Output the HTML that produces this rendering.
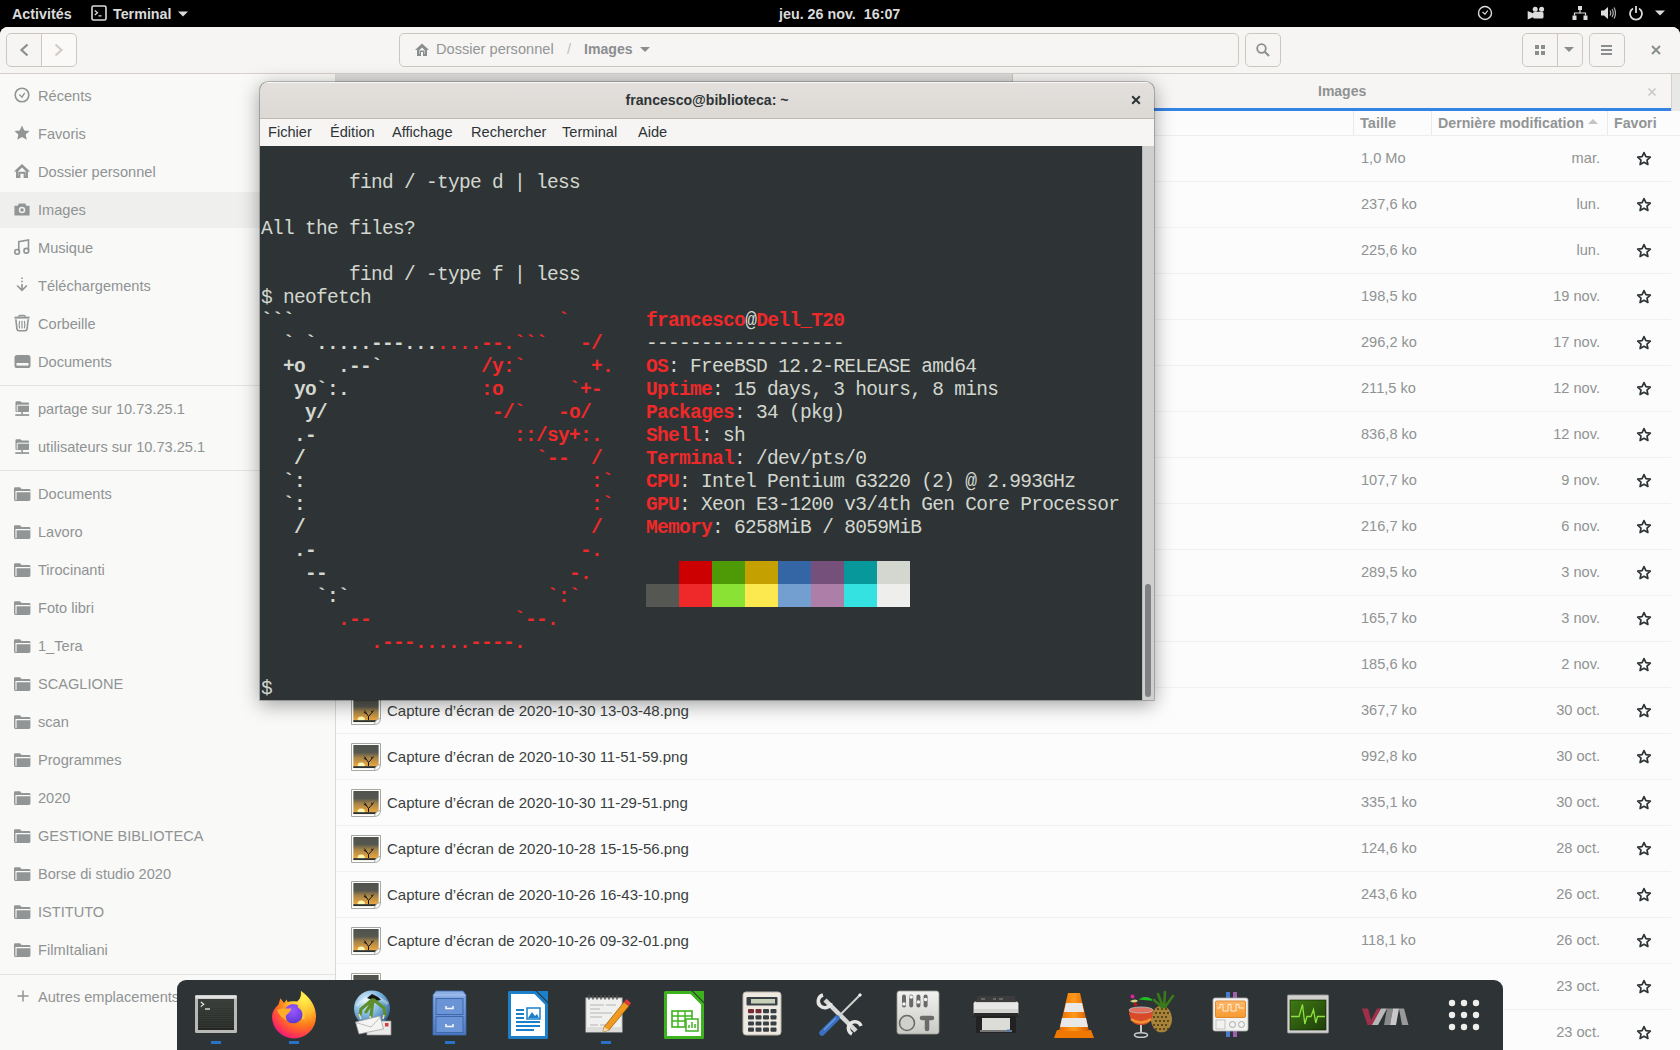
<!DOCTYPE html>
<html><head><meta charset="utf-8">
<style>
*{margin:0;padding:0;box-sizing:border-box}
html,body{width:1680px;height:1050px;overflow:hidden;background:#000;font-family:"Liberation Sans",sans-serif}
.a{position:absolute}
#top{left:0;top:0;width:1680px;height:27px;background:#000;color:#dadada;font-weight:bold;font-size:14.3px}
#naut{left:0;top:27px;width:1680px;height:1023px;background:#fcfcfc;border-radius:8px 8px 0 0;overflow:hidden}
#hdr{left:0;top:0;width:1680px;height:47px;background:#f6f5f4;border-bottom:1px solid #d5d0cc}
.btn{border:1px solid #cdc7c2;border-radius:5px;background:#f6f5f4}
#side{left:0;top:47px;width:336px;height:976px;background:#f9f9f8;border-right:1px solid #dcd8d4}
.si{position:absolute;left:38px;font-size:14.6px;color:#8f9393;white-space:nowrap}
.sic{position:absolute;left:15px;width:16px;height:16px;overflow:visible}
.sep{position:absolute;left:0;width:335px;height:1px;background:#e6e4e2}
#tabs{left:336px;top:47px;width:1344px;height:37px;background:#e9e8e6}
#list{left:336px;top:84px;width:1344px;height:939px;background:#fcfcfc}
.row{position:absolute;left:0;width:1335px;height:46px;border-bottom:1px solid #f1f1f0}
.fn{position:absolute;left:51px;top:14px;font-size:15px;color:#3a3f40;white-space:nowrap}
.sz{position:absolute;left:1025px;top:14px;font-size:14.6px;color:#8f9393;white-space:nowrap}
.dt{position:absolute;right:71px;top:14px;font-size:14.6px;color:#8f9393;white-space:nowrap;text-align:right}
.star{position:absolute;left:1300px;top:15px;width:16px;height:16px}
.fic{position:absolute;left:15px;top:9px;width:30px;height:28px}
#term{left:260px;top:82px;width:894px;height:618px;border-radius:8px 8px 0 0;box-shadow:0 4px 20px rgba(0,0,0,0.38),0 0 0 1px rgba(0,0,0,0.22);overflow:hidden;background:#2e3436}
#ttl{left:0;top:0;width:894px;height:37px;background:linear-gradient(#e3e0dd,#dcd8d4);box-shadow:inset 0 1px rgba(255,255,255,0.75);border-bottom:1px solid #bfb8b1;color:#2e3436;font-weight:bold;font-size:14.1px;text-align:center;line-height:36px}
#menu{left:0;top:37px;width:894px;height:27px;background:#f6f5f4;color:#2e3436;font-size:14.6px}
#menu span{position:absolute;top:5px}
#scr{left:0;top:64px;width:882px;height:554px;background:#2e3436;font-family:"Liberation Mono",monospace;font-size:19.5px;letter-spacing:-0.7px;color:#d3d7cf}
.tl{position:absolute;left:1px;margin-top:2px;height:23px;line-height:23px;white-space:pre}
.b{font-weight:bold}
.r{color:#ef2929;font-weight:bold}
#scr b{font-weight:bold}
#scr i{font-style:normal;font-weight:bold;color:#ef2929}
#sb{left:882px;top:64px;width:12px;height:554px;background:#cfcfcf;border-left:1px solid #b9b9b9}
#dock{left:177px;top:980px;width:1326px;height:70px;background:#2e3436;border-radius:9px 9px 0 0}
</style></head><body>
<div id="top" class="a">
  <div class="a" style="left:12px;top:6px">Activités</div>
  <svg class="a" style="left:91px;top:5px" width="16" height="16" viewBox="0 0 16 16"><rect x="1" y="1" width="14" height="14" rx="1.5" fill="none" stroke="#dadada" stroke-width="1.6"/><path d="M3.8 5.5 L6.5 7.8 L3.8 10.1 M7.5 10.8 L10.5 10.8" fill="none" stroke="#dadada" stroke-width="1.3"/></svg>
  <div class="a" style="left:113px;top:6px">Terminal</div>
  <svg class="a" style="left:177px;top:10px" width="12" height="8" viewBox="0 0 12 8"><path d="M1 1.5 L11 1.5 L6 6.5 Z" fill="#dadada"/></svg>
  <div class="a" style="left:779px;top:6px">jeu. 26 nov.&nbsp; 16:07</div>
  <svg class="a" style="left:1477px;top:5px" width="16" height="16" viewBox="0 0 16 16"><circle cx="8" cy="8" r="6.5" fill="none" stroke="#dcdcdc" stroke-width="1.4"/><path d="M5.5 7 L8 9.2 L10.8 5.5" fill="none" stroke="#dcdcdc" stroke-width="1.2"/></svg>
  <svg class="a" style="left:1526px;top:0" width="20" height="27" viewBox="1526 0 20 27"><path d="M1527.7 11 L1533.5 13.5 L1533.5 17 L1527.7 19.4 Z" fill="#dcdcdc"/><rect x="1533" y="11.8" width="10.5" height="6.8" rx="1.6" fill="#dcdcdc"/><circle cx="1535.2" cy="9.3" r="2.5" fill="#dcdcdc"/><circle cx="1541.6" cy="9.3" r="2.5" fill="#dcdcdc"/></svg>
  <svg class="a" style="left:1572px;top:5px" width="16" height="16" viewBox="0 0 16 16"><rect x="6" y="1" width="4" height="4" fill="#dcdcdc"/><rect x="0.5" y="10.5" width="4" height="4.5" fill="#dcdcdc"/><rect x="11.5" y="10.5" width="4" height="4.5" fill="#dcdcdc"/><path d="M8 5 L8 8 M2.5 10.5 L2.5 8 L13.5 8 L13.5 10.5" fill="none" stroke="#dcdcdc" stroke-width="1.2"/></svg>
  <svg class="a" style="left:1600px;top:5px" width="16" height="16" viewBox="0 0 16 16"><path d="M1 5.5 L4 5.5 L8 2 L8 14 L4 10.5 L1 10.5 Z" fill="#dcdcdc"/><path d="M10 5.5 Q11.5 8 10 10.5 M12 4 Q14.5 8 12 12 M14 2.5 Q17 8 14 13.5" fill="none" stroke="#b0b0ae" stroke-width="1.2"/></svg>
  <svg class="a" style="left:1628px;top:5px" width="16" height="16" viewBox="0 0 16 16"><path d="M5 3.5 A6 6 0 1 0 11 3.5" fill="none" stroke="#dcdcdc" stroke-width="1.8"/><path d="M8 1 L8 8" stroke="#dcdcdc" stroke-width="1.8"/></svg>
  <svg class="a" style="left:1654px;top:9px" width="12" height="8" viewBox="0 0 12 8"><path d="M1 1.5 L11 1.5 L6 6.5 Z" fill="#dcdcdc"/></svg>
</div>
<div id="naut" class="a">
  <div id="hdr" class="a">
  <div class="a btn" style="left:6px;top:6px;width:71px;height:34px;background:linear-gradient(90deg,#f6f5f4 50%,#faf9f8 50%)"></div>
  <div class="a" style="left:41px;top:7px;width:1px;height:32px;background:#cdc7c2"></div>
  <svg class="a" style="left:0;top:0" width="80" height="47"><path d="M27.5 17.5 L21.5 23 L27.5 28.5" fill="none" stroke="#8b8e8f" stroke-width="2.2"/><path d="M55.5 17.5 L61.5 23 L55.5 28.5" fill="none" stroke="#d2ccc7" stroke-width="2.2"/></svg>
  
  <div class="a btn" style="left:399px;top:6px;width:840px;height:34px"></div>
  <svg class="a" style="left:414px;top:15px" width="16" height="16" viewBox="0 0 16 16"><path d="M8 1.5 L1 8 L3 8 L3 14 L7 14 L7 10 L9 10 L9 14 L13 14 L13 8 L15 8 Z M5 8.5 L8 5.5 L11 8.5 L11 12 L10.5 12 L10.5 8.5 L5.5 8.5 L5.5 12 L5 12 Z" fill="#8b8e8f" fill-rule="evenodd"/></svg>
  <div class="a" style="left:436px;top:14px;font-size:14.6px;color:#929595;white-space:nowrap">Dossier personnel</div>
  <div class="a" style="left:567px;top:14px;font-size:14.6px;color:#c0bfbd">/</div>
  <div class="a" style="left:584px;top:14px;font-size:14.1px;color:#8b8e8f;font-weight:bold">Images</div>
  <svg class="a" style="left:638px;top:17px" width="14" height="12" viewBox="0 0 14 12"><path d="M2 3 L12 3 L7 8 Z" fill="#8b8e8f"/></svg>
  <div class="a btn" style="left:1245px;top:6px;width:36px;height:34px"></div>
  <svg class="a" style="left:1255px;top:15px" width="16" height="16" viewBox="0 0 16 16"><circle cx="6.5" cy="6.5" r="4.3" fill="none" stroke="#8b8e8f" stroke-width="1.8"/><path d="M9.5 9.5 L14 14" stroke="#8b8e8f" stroke-width="2"/></svg>
  <div class="a btn" style="left:1522px;top:6px;width:61px;height:34px"></div>
  <div class="a" style="left:1557px;top:7px;width:1px;height:32px;background:#cdc7c2"></div>
  <svg class="a" style="left:1532px;top:15px" width="16" height="16" viewBox="0 0 16 16"><rect x="3" y="3" width="4" height="4" fill="#8b8e8f"/><rect x="9" y="3" width="4" height="4" fill="#8b8e8f"/><rect x="3" y="9" width="4" height="4" fill="#8b8e8f"/><rect x="9" y="9" width="4" height="4" fill="#8b8e8f"/></svg>
  <svg class="a" style="left:1562px;top:16px" width="14" height="14" viewBox="0 0 14 14"><path d="M2 4 L12 4 L7 9 Z" fill="#8b8e8f"/></svg>
  <div class="a btn" style="left:1589px;top:6px;width:36px;height:34px"></div>
  <svg class="a" style="left:1599px;top:15px" width="16" height="16" viewBox="0 0 16 16"><rect x="2" y="3" width="11" height="2" fill="#8b8e8f"/><rect x="2" y="7" width="11" height="2" fill="#8b8e8f"/><rect x="2" y="11" width="11" height="2" fill="#8b8e8f"/></svg>
  <svg class="a" style="left:1648px;top:15px" width="16" height="16" viewBox="0 0 16 16"><path d="M4 4 L12 12 M12 4 L4 12" stroke="#8b8e8f" stroke-width="2"/></svg>
</div>
  <div id="side" class="a">
<div class="a" style="left:0;top:118px;width:335px;height:36px;background:#efefee"></div>
<svg class="sic" style="top:13px" width="16" height="16" viewBox="0 0 16 16"><g transform="translate(7,8) scale(1.08) translate(-8,-8)"><circle cx="8" cy="8" r="6.3" fill="none" stroke="#929595" stroke-width="1.5"/><path d="M5.5 7.5 L8 10 L10.5 6" fill="none" stroke="#929595" stroke-width="1.2"/></g></svg><div class="si" style="top:14px">Récents</div>
<svg class="sic" style="top:51px" width="16" height="16" viewBox="0 0 16 16"><g transform="translate(7,8) scale(1.08) translate(-8,-8)"><path d="M8 1 L10.1 5.6 L15 6.1 L11.4 9.4 L12.4 14.3 L8 11.8 L3.6 14.3 L4.6 9.4 L1 6.1 L5.9 5.6 Z" fill="#929595"/></g></svg><div class="si" style="top:52px">Favoris</div>
<svg class="sic" style="top:89px" width="16" height="16" viewBox="0 0 16 16"><g transform="translate(7,8) scale(1.08) translate(-8,-8)"><path d="M8 1.5 L0.5 8.5 L2.5 8.5 L2.5 14.5 L6.5 14.5 L6.5 10.5 L9.5 10.5 L9.5 14.5 L13.5 14.5 L13.5 8.5 L15.5 8.5 Z M4.5 8.2 L8 4.8 L11.5 8.2 L11.5 12.5 L11.2 12.5 L11.2 8.7 L4.8 8.7 L4.8 12.5 L4.5 12.5 Z" fill="#929595" fill-rule="evenodd"/></g></svg><div class="si" style="top:90px">Dossier personnel</div>
<svg class="sic" style="top:127px" width="16" height="16" viewBox="0 0 16 16"><g transform="translate(7,8) scale(1.08) translate(-8,-8)"><path d="M1 5 L4 5 L5 3 L11 3 L12 5 L15 5 L15 14 L1 14 Z" fill="#929595"/><circle cx="8" cy="9" r="3" fill="#efefee"/><circle cx="8" cy="9" r="1.6" fill="#929595"/></g></svg><div class="si" style="top:128px">Images</div>
<svg class="sic" style="top:165px" width="16" height="16" viewBox="0 0 16 16"><g transform="translate(7,8) scale(1.08) translate(-8,-8)"><path d="M5 12 L5 3 L14 1.5 L14 11" fill="none" stroke="#929595" stroke-width="1.5"/><circle cx="3.5" cy="12.5" r="2.2" fill="none" stroke="#929595" stroke-width="1.5"/><circle cx="12" cy="11.5" r="2.2" fill="none" stroke="#929595" stroke-width="1.5"/></g></svg><div class="si" style="top:166px">Musique</div>
<svg class="sic" style="top:203px" width="16" height="16" viewBox="0 0 16 16"><g transform="translate(7,8) scale(1.08) translate(-8,-8)"><path d="M8 1 L8 2.5 M8 4 L8 5.5 M8 7 L8 12 M3.5 8.5 L8 13 L12.5 8.5" fill="none" stroke="#929595" stroke-width="1.5"/></g></svg><div class="si" style="top:204px">Téléchargements</div>
<svg class="sic" style="top:241px" width="16" height="16" viewBox="0 0 16 16"><g transform="translate(7,8) scale(1.08) translate(-8,-8)"><path d="M1 3 H15" stroke="#929595" stroke-width="1.8"/><path d="M5 2.2 Q5 1 6.2 1 H9.8 Q11 1 11 2.2" fill="none" stroke="#929595" stroke-width="1.4"/><path d="M2.3 4.5 L3.3 13.5 Q3.5 15.2 5.2 15.2 L10.8 15.2 Q12.5 15.2 12.7 13.5 L13.7 4.5" fill="none" stroke="#929595" stroke-width="1.5"/><path d="M5.8 6 Q5 9.5 5.8 13 M8 6 V13 M10.2 6 Q11 9.5 10.2 13" fill="none" stroke="#929595" stroke-width="1.1"/></g></svg><div class="si" style="top:242px">Corbeille</div>
<svg class="sic" style="top:279px" width="16" height="16" viewBox="0 0 16 16"><rect x="-0.5" y="2" width="16" height="13" rx="2.6" fill="#929595"/><rect x="1.5" y="10" width="12" height="2.6" fill="#f9f9f8"/></svg><div class="si" style="top:280px">Documents</div>
<svg class="sic" style="top:326px" width="16" height="16" viewBox="0 0 16 16"><path d="M0.5 2.2 Q0.5 1.2 1.5 1.2 L5.5 1.2 L6.8 2.6 L13 2.6 Q14 2.6 14 3.6 L14 11 Q14 12 13 12 L1.5 12 Q0.5 12 0.5 11 Z" fill="#929595"/><path d="M2.2 11.5 L2.2 5.2 L14 5.2" fill="none" stroke="#f9f9f8" stroke-width="1"/><rect x="6.3" y="12" width="1.6" height="2.6" fill="#929595"/><rect x="0.3" y="14.2" width="13.8" height="1.7" fill="#929595"/></svg><div class="si" style="top:327px">partage sur 10.73.25.1</div>
<svg class="sic" style="top:364px" width="16" height="16" viewBox="0 0 16 16"><path d="M0.5 2.2 Q0.5 1.2 1.5 1.2 L5.5 1.2 L6.8 2.6 L13 2.6 Q14 2.6 14 3.6 L14 11 Q14 12 13 12 L1.5 12 Q0.5 12 0.5 11 Z" fill="#929595"/><path d="M2.2 11.5 L2.2 5.2 L14 5.2" fill="none" stroke="#f9f9f8" stroke-width="1"/><rect x="6.3" y="12" width="1.6" height="2.6" fill="#929595"/><rect x="0.3" y="14.2" width="13.8" height="1.7" fill="#929595"/></svg><div class="si" style="top:365px">utilisateurs sur 10.73.25.1</div>
<svg class="sic" style="top:411px" width="16" height="16" viewBox="0 0 16 16"><path d="M-1 3.5 Q-1 2.2 0.3 2.2 L5 2.2 L6.6 4 L14.2 4 Q15.4 4 15.4 5.2 L15.4 14.6 Q15.4 16 14 16 L0.3 16 Q-1 16 -1 14.6 Z" fill="#929595"/><path d="M1 15 L1 6.6 L15.4 6.6" fill="none" stroke="#f9f9f8" stroke-width="1.1"/></svg><div class="si" style="top:412px">Documents</div>
<svg class="sic" style="top:449px" width="16" height="16" viewBox="0 0 16 16"><path d="M-1 3.5 Q-1 2.2 0.3 2.2 L5 2.2 L6.6 4 L14.2 4 Q15.4 4 15.4 5.2 L15.4 14.6 Q15.4 16 14 16 L0.3 16 Q-1 16 -1 14.6 Z" fill="#929595"/><path d="M1 15 L1 6.6 L15.4 6.6" fill="none" stroke="#f9f9f8" stroke-width="1.1"/></svg><div class="si" style="top:450px">Lavoro</div>
<svg class="sic" style="top:487px" width="16" height="16" viewBox="0 0 16 16"><path d="M-1 3.5 Q-1 2.2 0.3 2.2 L5 2.2 L6.6 4 L14.2 4 Q15.4 4 15.4 5.2 L15.4 14.6 Q15.4 16 14 16 L0.3 16 Q-1 16 -1 14.6 Z" fill="#929595"/><path d="M1 15 L1 6.6 L15.4 6.6" fill="none" stroke="#f9f9f8" stroke-width="1.1"/></svg><div class="si" style="top:488px">Tirocinanti</div>
<svg class="sic" style="top:525px" width="16" height="16" viewBox="0 0 16 16"><path d="M-1 3.5 Q-1 2.2 0.3 2.2 L5 2.2 L6.6 4 L14.2 4 Q15.4 4 15.4 5.2 L15.4 14.6 Q15.4 16 14 16 L0.3 16 Q-1 16 -1 14.6 Z" fill="#929595"/><path d="M1 15 L1 6.6 L15.4 6.6" fill="none" stroke="#f9f9f8" stroke-width="1.1"/></svg><div class="si" style="top:526px">Foto libri</div>
<svg class="sic" style="top:563px" width="16" height="16" viewBox="0 0 16 16"><path d="M-1 3.5 Q-1 2.2 0.3 2.2 L5 2.2 L6.6 4 L14.2 4 Q15.4 4 15.4 5.2 L15.4 14.6 Q15.4 16 14 16 L0.3 16 Q-1 16 -1 14.6 Z" fill="#929595"/><path d="M1 15 L1 6.6 L15.4 6.6" fill="none" stroke="#f9f9f8" stroke-width="1.1"/></svg><div class="si" style="top:564px">1_Tera</div>
<svg class="sic" style="top:601px" width="16" height="16" viewBox="0 0 16 16"><path d="M-1 3.5 Q-1 2.2 0.3 2.2 L5 2.2 L6.6 4 L14.2 4 Q15.4 4 15.4 5.2 L15.4 14.6 Q15.4 16 14 16 L0.3 16 Q-1 16 -1 14.6 Z" fill="#929595"/><path d="M1 15 L1 6.6 L15.4 6.6" fill="none" stroke="#f9f9f8" stroke-width="1.1"/></svg><div class="si" style="top:602px">SCAGLIONE</div>
<svg class="sic" style="top:639px" width="16" height="16" viewBox="0 0 16 16"><path d="M-1 3.5 Q-1 2.2 0.3 2.2 L5 2.2 L6.6 4 L14.2 4 Q15.4 4 15.4 5.2 L15.4 14.6 Q15.4 16 14 16 L0.3 16 Q-1 16 -1 14.6 Z" fill="#929595"/><path d="M1 15 L1 6.6 L15.4 6.6" fill="none" stroke="#f9f9f8" stroke-width="1.1"/></svg><div class="si" style="top:640px">scan</div>
<svg class="sic" style="top:677px" width="16" height="16" viewBox="0 0 16 16"><path d="M-1 3.5 Q-1 2.2 0.3 2.2 L5 2.2 L6.6 4 L14.2 4 Q15.4 4 15.4 5.2 L15.4 14.6 Q15.4 16 14 16 L0.3 16 Q-1 16 -1 14.6 Z" fill="#929595"/><path d="M1 15 L1 6.6 L15.4 6.6" fill="none" stroke="#f9f9f8" stroke-width="1.1"/></svg><div class="si" style="top:678px">Programmes</div>
<svg class="sic" style="top:715px" width="16" height="16" viewBox="0 0 16 16"><path d="M-1 3.5 Q-1 2.2 0.3 2.2 L5 2.2 L6.6 4 L14.2 4 Q15.4 4 15.4 5.2 L15.4 14.6 Q15.4 16 14 16 L0.3 16 Q-1 16 -1 14.6 Z" fill="#929595"/><path d="M1 15 L1 6.6 L15.4 6.6" fill="none" stroke="#f9f9f8" stroke-width="1.1"/></svg><div class="si" style="top:716px">2020</div>
<svg class="sic" style="top:753px" width="16" height="16" viewBox="0 0 16 16"><path d="M-1 3.5 Q-1 2.2 0.3 2.2 L5 2.2 L6.6 4 L14.2 4 Q15.4 4 15.4 5.2 L15.4 14.6 Q15.4 16 14 16 L0.3 16 Q-1 16 -1 14.6 Z" fill="#929595"/><path d="M1 15 L1 6.6 L15.4 6.6" fill="none" stroke="#f9f9f8" stroke-width="1.1"/></svg><div class="si" style="top:754px">GESTIONE BIBLIOTECA</div>
<svg class="sic" style="top:791px" width="16" height="16" viewBox="0 0 16 16"><path d="M-1 3.5 Q-1 2.2 0.3 2.2 L5 2.2 L6.6 4 L14.2 4 Q15.4 4 15.4 5.2 L15.4 14.6 Q15.4 16 14 16 L0.3 16 Q-1 16 -1 14.6 Z" fill="#929595"/><path d="M1 15 L1 6.6 L15.4 6.6" fill="none" stroke="#f9f9f8" stroke-width="1.1"/></svg><div class="si" style="top:792px">Borse di studio 2020</div>
<svg class="sic" style="top:829px" width="16" height="16" viewBox="0 0 16 16"><path d="M-1 3.5 Q-1 2.2 0.3 2.2 L5 2.2 L6.6 4 L14.2 4 Q15.4 4 15.4 5.2 L15.4 14.6 Q15.4 16 14 16 L0.3 16 Q-1 16 -1 14.6 Z" fill="#929595"/><path d="M1 15 L1 6.6 L15.4 6.6" fill="none" stroke="#f9f9f8" stroke-width="1.1"/></svg><div class="si" style="top:830px">ISTITUTO</div>
<svg class="sic" style="top:867px" width="16" height="16" viewBox="0 0 16 16"><path d="M-1 3.5 Q-1 2.2 0.3 2.2 L5 2.2 L6.6 4 L14.2 4 Q15.4 4 15.4 5.2 L15.4 14.6 Q15.4 16 14 16 L0.3 16 Q-1 16 -1 14.6 Z" fill="#929595"/><path d="M1 15 L1 6.6 L15.4 6.6" fill="none" stroke="#f9f9f8" stroke-width="1.1"/></svg><div class="si" style="top:868px">FilmItaliani</div>
<svg class="sic" style="top:914px" width="16" height="16" viewBox="0 0 16 16"><path d="M8 2.5 L8 13.5 M2.5 8 L13.5 8" stroke="#929595" stroke-width="1.5"/></svg><div class="si" style="top:915px">Autres emplacements</div>
<div class="sep" style="top:311px"></div>
<div class="sep" style="top:396px"></div>
<div class="sep" style="top:900px"></div>
</div>
  <div id="tabs" class="a">
  <div class="a" style="left:0;top:0;width:676px;height:36px;background:linear-gradient(#dedddb,#cfcecc);border-bottom:1px solid #b6b1ac"></div>
  <div class="a" style="left:676px;top:0;width:1px;height:36px;background:#c8c4c0"></div>
  <div class="a" style="left:677px;top:0;width:658px;height:37px;background:#f6f5f4"></div>
  <div class="a" style="left:677px;top:34px;width:658px;height:3px;background:#3584e4"></div>
  <div class="a" style="left:1335px;top:0;width:9px;height:37px;background:#e8e8e7;border-left:1px solid #d5d0cc"></div>
  <div class="a" style="left:982px;top:9px;font-size:14px;color:#8f9292;font-weight:bold">Images</div>
  <svg class="a" style="left:1308px;top:10px" width="16" height="16" viewBox="0 0 16 16"><path d="M4.5 4.5 L11.5 11.5 M11.5 4.5 L4.5 11.5" stroke="#c9c8c6" stroke-width="1.6"/></svg>
</div>
  <div id="list" class="a"><svg width="0" height="0" style="position:absolute"><defs><linearGradient id="sky" x1="0" y1="0" x2="0" y2="1"><stop offset="0" stop-color="#50534d"/><stop offset="0.32" stop-color="#55574f"/><stop offset="0.55" stop-color="#a88448"/><stop offset="1" stop-color="#fbb03a"/></linearGradient><clipPath id="icc"><path d="M2.2 2 H27.8 V21.8 L24.5 25.2 H2.2 Z"/></clipPath></defs></svg>
  <div class="a" style="left:0;top:0;width:1344px;height:25px;border-bottom:1px solid #efeeed"></div>
  <div class="a" style="left:1017px;top:0;width:1px;height:24px;background:#ebeae9"></div>
  <div class="a" style="left:1095px;top:0;width:1px;height:24px;background:#ebeae9"></div>
  <div class="a" style="left:1271px;top:0;width:1px;height:24px;background:#ebeae9"></div>
  <div class="a" style="left:1024px;top:4px;font-size:14.6px;font-weight:bold;color:#929595">Taille</div>
  <div class="a" style="left:1102px;top:4px;font-size:14.2px;font-weight:bold;color:#929595;white-space:nowrap">Dernière modification</div>
  <svg class="a" style="left:1251px;top:6px" width="12" height="10" viewBox="0 0 12 10"><path d="M1 7 L11 7 L6 2 Z" fill="#c4c4c3"/></svg>
  <div class="a" style="left:1278px;top:4px;font-size:14.2px;font-weight:bold;color:#929595">Favori</div>
<div class="row" style="top:25px"><svg class="fic" width="30" height="28" viewBox="0 0 30 28"><path d="M0.5 0.5 L29.5 0.5 L29.5 21 Q29.5 27.5 23 27.5 L0.5 27.5 Z" fill="#fff" stroke="#a4a7a2" stroke-width="1"/><g clip-path="url(#icc)"><rect x="2.2" y="2" width="25.6" height="23.2" fill="url(#sky)"/><ellipse cx="10.2" cy="22.6" rx="3.6" ry="3" fill="#fff6b0"/><path d="M17.5 23 L17.5 19.5 L13.5 13.5 M17.5 19.5 L21 15.5 L22.5 13.5 M15.3 16.5 L12.8 15.3 M21 15.5 L20.6 13.8" fill="none" stroke="#151515" stroke-width="1"/><rect x="2.2" y="23.2" width="25.6" height="2" fill="#2b3134"/></g><path d="M23.5 27 Q24 22.5 29 21.5" fill="#f4f4f2" stroke="#a4a7a2" stroke-width="0.9"/></svg><div class="fn">Capture d’écran de 2020-11-20 10-00-00.png</div><div class="sz">1,0 Mo</div><div class="dt">mar.</div><svg class="star" width="16" height="16" viewBox="0 0 16 16"><path d="M8 1.6 L9.9 5.6 L14.3 6.1 L11 9.1 L11.9 13.5 L8 11.3 L4.1 13.5 L5 9.1 L1.7 6.1 L6.1 5.6 Z" fill="none" stroke="#2e3436" stroke-width="1.7" stroke-linejoin="round"/></svg></div>
<div class="row" style="top:71px"><svg class="fic" width="30" height="28" viewBox="0 0 30 28"><path d="M0.5 0.5 L29.5 0.5 L29.5 21 Q29.5 27.5 23 27.5 L0.5 27.5 Z" fill="#fff" stroke="#a4a7a2" stroke-width="1"/><g clip-path="url(#icc)"><rect x="2.2" y="2" width="25.6" height="23.2" fill="url(#sky)"/><ellipse cx="10.2" cy="22.6" rx="3.6" ry="3" fill="#fff6b0"/><path d="M17.5 23 L17.5 19.5 L13.5 13.5 M17.5 19.5 L21 15.5 L22.5 13.5 M15.3 16.5 L12.8 15.3 M21 15.5 L20.6 13.8" fill="none" stroke="#151515" stroke-width="1"/><rect x="2.2" y="23.2" width="25.6" height="2" fill="#2b3134"/></g><path d="M23.5 27 Q24 22.5 29 21.5" fill="#f4f4f2" stroke="#a4a7a2" stroke-width="0.9"/></svg><div class="fn">Capture d’écran de 2020-11-21 10-00-00.png</div><div class="sz">237,6 ko</div><div class="dt">lun.</div><svg class="star" width="16" height="16" viewBox="0 0 16 16"><path d="M8 1.6 L9.9 5.6 L14.3 6.1 L11 9.1 L11.9 13.5 L8 11.3 L4.1 13.5 L5 9.1 L1.7 6.1 L6.1 5.6 Z" fill="none" stroke="#2e3436" stroke-width="1.7" stroke-linejoin="round"/></svg></div>
<div class="row" style="top:117px"><svg class="fic" width="30" height="28" viewBox="0 0 30 28"><path d="M0.5 0.5 L29.5 0.5 L29.5 21 Q29.5 27.5 23 27.5 L0.5 27.5 Z" fill="#fff" stroke="#a4a7a2" stroke-width="1"/><g clip-path="url(#icc)"><rect x="2.2" y="2" width="25.6" height="23.2" fill="url(#sky)"/><ellipse cx="10.2" cy="22.6" rx="3.6" ry="3" fill="#fff6b0"/><path d="M17.5 23 L17.5 19.5 L13.5 13.5 M17.5 19.5 L21 15.5 L22.5 13.5 M15.3 16.5 L12.8 15.3 M21 15.5 L20.6 13.8" fill="none" stroke="#151515" stroke-width="1"/><rect x="2.2" y="23.2" width="25.6" height="2" fill="#2b3134"/></g><path d="M23.5 27 Q24 22.5 29 21.5" fill="#f4f4f2" stroke="#a4a7a2" stroke-width="0.9"/></svg><div class="fn">Capture d’écran de 2020-11-22 10-00-00.png</div><div class="sz">225,6 ko</div><div class="dt">lun.</div><svg class="star" width="16" height="16" viewBox="0 0 16 16"><path d="M8 1.6 L9.9 5.6 L14.3 6.1 L11 9.1 L11.9 13.5 L8 11.3 L4.1 13.5 L5 9.1 L1.7 6.1 L6.1 5.6 Z" fill="none" stroke="#2e3436" stroke-width="1.7" stroke-linejoin="round"/></svg></div>
<div class="row" style="top:163px"><svg class="fic" width="30" height="28" viewBox="0 0 30 28"><path d="M0.5 0.5 L29.5 0.5 L29.5 21 Q29.5 27.5 23 27.5 L0.5 27.5 Z" fill="#fff" stroke="#a4a7a2" stroke-width="1"/><g clip-path="url(#icc)"><rect x="2.2" y="2" width="25.6" height="23.2" fill="url(#sky)"/><ellipse cx="10.2" cy="22.6" rx="3.6" ry="3" fill="#fff6b0"/><path d="M17.5 23 L17.5 19.5 L13.5 13.5 M17.5 19.5 L21 15.5 L22.5 13.5 M15.3 16.5 L12.8 15.3 M21 15.5 L20.6 13.8" fill="none" stroke="#151515" stroke-width="1"/><rect x="2.2" y="23.2" width="25.6" height="2" fill="#2b3134"/></g><path d="M23.5 27 Q24 22.5 29 21.5" fill="#f4f4f2" stroke="#a4a7a2" stroke-width="0.9"/></svg><div class="fn">Capture d’écran de 2020-11-23 10-00-00.png</div><div class="sz">198,5 ko</div><div class="dt">19 nov.</div><svg class="star" width="16" height="16" viewBox="0 0 16 16"><path d="M8 1.6 L9.9 5.6 L14.3 6.1 L11 9.1 L11.9 13.5 L8 11.3 L4.1 13.5 L5 9.1 L1.7 6.1 L6.1 5.6 Z" fill="none" stroke="#2e3436" stroke-width="1.7" stroke-linejoin="round"/></svg></div>
<div class="row" style="top:209px"><svg class="fic" width="30" height="28" viewBox="0 0 30 28"><path d="M0.5 0.5 L29.5 0.5 L29.5 21 Q29.5 27.5 23 27.5 L0.5 27.5 Z" fill="#fff" stroke="#a4a7a2" stroke-width="1"/><g clip-path="url(#icc)"><rect x="2.2" y="2" width="25.6" height="23.2" fill="url(#sky)"/><ellipse cx="10.2" cy="22.6" rx="3.6" ry="3" fill="#fff6b0"/><path d="M17.5 23 L17.5 19.5 L13.5 13.5 M17.5 19.5 L21 15.5 L22.5 13.5 M15.3 16.5 L12.8 15.3 M21 15.5 L20.6 13.8" fill="none" stroke="#151515" stroke-width="1"/><rect x="2.2" y="23.2" width="25.6" height="2" fill="#2b3134"/></g><path d="M23.5 27 Q24 22.5 29 21.5" fill="#f4f4f2" stroke="#a4a7a2" stroke-width="0.9"/></svg><div class="fn">Capture d’écran de 2020-11-24 10-00-00.png</div><div class="sz">296,2 ko</div><div class="dt">17 nov.</div><svg class="star" width="16" height="16" viewBox="0 0 16 16"><path d="M8 1.6 L9.9 5.6 L14.3 6.1 L11 9.1 L11.9 13.5 L8 11.3 L4.1 13.5 L5 9.1 L1.7 6.1 L6.1 5.6 Z" fill="none" stroke="#2e3436" stroke-width="1.7" stroke-linejoin="round"/></svg></div>
<div class="row" style="top:255px"><svg class="fic" width="30" height="28" viewBox="0 0 30 28"><path d="M0.5 0.5 L29.5 0.5 L29.5 21 Q29.5 27.5 23 27.5 L0.5 27.5 Z" fill="#fff" stroke="#a4a7a2" stroke-width="1"/><g clip-path="url(#icc)"><rect x="2.2" y="2" width="25.6" height="23.2" fill="url(#sky)"/><ellipse cx="10.2" cy="22.6" rx="3.6" ry="3" fill="#fff6b0"/><path d="M17.5 23 L17.5 19.5 L13.5 13.5 M17.5 19.5 L21 15.5 L22.5 13.5 M15.3 16.5 L12.8 15.3 M21 15.5 L20.6 13.8" fill="none" stroke="#151515" stroke-width="1"/><rect x="2.2" y="23.2" width="25.6" height="2" fill="#2b3134"/></g><path d="M23.5 27 Q24 22.5 29 21.5" fill="#f4f4f2" stroke="#a4a7a2" stroke-width="0.9"/></svg><div class="fn">Capture d’écran de 2020-11-25 10-00-00.png</div><div class="sz">211,5 ko</div><div class="dt">12 nov.</div><svg class="star" width="16" height="16" viewBox="0 0 16 16"><path d="M8 1.6 L9.9 5.6 L14.3 6.1 L11 9.1 L11.9 13.5 L8 11.3 L4.1 13.5 L5 9.1 L1.7 6.1 L6.1 5.6 Z" fill="none" stroke="#2e3436" stroke-width="1.7" stroke-linejoin="round"/></svg></div>
<div class="row" style="top:301px"><svg class="fic" width="30" height="28" viewBox="0 0 30 28"><path d="M0.5 0.5 L29.5 0.5 L29.5 21 Q29.5 27.5 23 27.5 L0.5 27.5 Z" fill="#fff" stroke="#a4a7a2" stroke-width="1"/><g clip-path="url(#icc)"><rect x="2.2" y="2" width="25.6" height="23.2" fill="url(#sky)"/><ellipse cx="10.2" cy="22.6" rx="3.6" ry="3" fill="#fff6b0"/><path d="M17.5 23 L17.5 19.5 L13.5 13.5 M17.5 19.5 L21 15.5 L22.5 13.5 M15.3 16.5 L12.8 15.3 M21 15.5 L20.6 13.8" fill="none" stroke="#151515" stroke-width="1"/><rect x="2.2" y="23.2" width="25.6" height="2" fill="#2b3134"/></g><path d="M23.5 27 Q24 22.5 29 21.5" fill="#f4f4f2" stroke="#a4a7a2" stroke-width="0.9"/></svg><div class="fn">Capture d’écran de 2020-11-26 10-00-00.png</div><div class="sz">836,8 ko</div><div class="dt">12 nov.</div><svg class="star" width="16" height="16" viewBox="0 0 16 16"><path d="M8 1.6 L9.9 5.6 L14.3 6.1 L11 9.1 L11.9 13.5 L8 11.3 L4.1 13.5 L5 9.1 L1.7 6.1 L6.1 5.6 Z" fill="none" stroke="#2e3436" stroke-width="1.7" stroke-linejoin="round"/></svg></div>
<div class="row" style="top:347px"><svg class="fic" width="30" height="28" viewBox="0 0 30 28"><path d="M0.5 0.5 L29.5 0.5 L29.5 21 Q29.5 27.5 23 27.5 L0.5 27.5 Z" fill="#fff" stroke="#a4a7a2" stroke-width="1"/><g clip-path="url(#icc)"><rect x="2.2" y="2" width="25.6" height="23.2" fill="url(#sky)"/><ellipse cx="10.2" cy="22.6" rx="3.6" ry="3" fill="#fff6b0"/><path d="M17.5 23 L17.5 19.5 L13.5 13.5 M17.5 19.5 L21 15.5 L22.5 13.5 M15.3 16.5 L12.8 15.3 M21 15.5 L20.6 13.8" fill="none" stroke="#151515" stroke-width="1"/><rect x="2.2" y="23.2" width="25.6" height="2" fill="#2b3134"/></g><path d="M23.5 27 Q24 22.5 29 21.5" fill="#f4f4f2" stroke="#a4a7a2" stroke-width="0.9"/></svg><div class="fn">Capture d’écran de 2020-11-27 10-00-00.png</div><div class="sz">107,7 ko</div><div class="dt">9 nov.</div><svg class="star" width="16" height="16" viewBox="0 0 16 16"><path d="M8 1.6 L9.9 5.6 L14.3 6.1 L11 9.1 L11.9 13.5 L8 11.3 L4.1 13.5 L5 9.1 L1.7 6.1 L6.1 5.6 Z" fill="none" stroke="#2e3436" stroke-width="1.7" stroke-linejoin="round"/></svg></div>
<div class="row" style="top:393px"><svg class="fic" width="30" height="28" viewBox="0 0 30 28"><path d="M0.5 0.5 L29.5 0.5 L29.5 21 Q29.5 27.5 23 27.5 L0.5 27.5 Z" fill="#fff" stroke="#a4a7a2" stroke-width="1"/><g clip-path="url(#icc)"><rect x="2.2" y="2" width="25.6" height="23.2" fill="url(#sky)"/><ellipse cx="10.2" cy="22.6" rx="3.6" ry="3" fill="#fff6b0"/><path d="M17.5 23 L17.5 19.5 L13.5 13.5 M17.5 19.5 L21 15.5 L22.5 13.5 M15.3 16.5 L12.8 15.3 M21 15.5 L20.6 13.8" fill="none" stroke="#151515" stroke-width="1"/><rect x="2.2" y="23.2" width="25.6" height="2" fill="#2b3134"/></g><path d="M23.5 27 Q24 22.5 29 21.5" fill="#f4f4f2" stroke="#a4a7a2" stroke-width="0.9"/></svg><div class="fn">Capture d’écran de 2020-11-28 10-00-00.png</div><div class="sz">216,7 ko</div><div class="dt">6 nov.</div><svg class="star" width="16" height="16" viewBox="0 0 16 16"><path d="M8 1.6 L9.9 5.6 L14.3 6.1 L11 9.1 L11.9 13.5 L8 11.3 L4.1 13.5 L5 9.1 L1.7 6.1 L6.1 5.6 Z" fill="none" stroke="#2e3436" stroke-width="1.7" stroke-linejoin="round"/></svg></div>
<div class="row" style="top:439px"><svg class="fic" width="30" height="28" viewBox="0 0 30 28"><path d="M0.5 0.5 L29.5 0.5 L29.5 21 Q29.5 27.5 23 27.5 L0.5 27.5 Z" fill="#fff" stroke="#a4a7a2" stroke-width="1"/><g clip-path="url(#icc)"><rect x="2.2" y="2" width="25.6" height="23.2" fill="url(#sky)"/><ellipse cx="10.2" cy="22.6" rx="3.6" ry="3" fill="#fff6b0"/><path d="M17.5 23 L17.5 19.5 L13.5 13.5 M17.5 19.5 L21 15.5 L22.5 13.5 M15.3 16.5 L12.8 15.3 M21 15.5 L20.6 13.8" fill="none" stroke="#151515" stroke-width="1"/><rect x="2.2" y="23.2" width="25.6" height="2" fill="#2b3134"/></g><path d="M23.5 27 Q24 22.5 29 21.5" fill="#f4f4f2" stroke="#a4a7a2" stroke-width="0.9"/></svg><div class="fn">Capture d’écran de 2020-11-29 10-00-00.png</div><div class="sz">289,5 ko</div><div class="dt">3 nov.</div><svg class="star" width="16" height="16" viewBox="0 0 16 16"><path d="M8 1.6 L9.9 5.6 L14.3 6.1 L11 9.1 L11.9 13.5 L8 11.3 L4.1 13.5 L5 9.1 L1.7 6.1 L6.1 5.6 Z" fill="none" stroke="#2e3436" stroke-width="1.7" stroke-linejoin="round"/></svg></div>
<div class="row" style="top:485px"><svg class="fic" width="30" height="28" viewBox="0 0 30 28"><path d="M0.5 0.5 L29.5 0.5 L29.5 21 Q29.5 27.5 23 27.5 L0.5 27.5 Z" fill="#fff" stroke="#a4a7a2" stroke-width="1"/><g clip-path="url(#icc)"><rect x="2.2" y="2" width="25.6" height="23.2" fill="url(#sky)"/><ellipse cx="10.2" cy="22.6" rx="3.6" ry="3" fill="#fff6b0"/><path d="M17.5 23 L17.5 19.5 L13.5 13.5 M17.5 19.5 L21 15.5 L22.5 13.5 M15.3 16.5 L12.8 15.3 M21 15.5 L20.6 13.8" fill="none" stroke="#151515" stroke-width="1"/><rect x="2.2" y="23.2" width="25.6" height="2" fill="#2b3134"/></g><path d="M23.5 27 Q24 22.5 29 21.5" fill="#f4f4f2" stroke="#a4a7a2" stroke-width="0.9"/></svg><div class="fn">Capture d’écran de 2020-11-210 10-00-00.png</div><div class="sz">165,7 ko</div><div class="dt">3 nov.</div><svg class="star" width="16" height="16" viewBox="0 0 16 16"><path d="M8 1.6 L9.9 5.6 L14.3 6.1 L11 9.1 L11.9 13.5 L8 11.3 L4.1 13.5 L5 9.1 L1.7 6.1 L6.1 5.6 Z" fill="none" stroke="#2e3436" stroke-width="1.7" stroke-linejoin="round"/></svg></div>
<div class="row" style="top:531px"><svg class="fic" width="30" height="28" viewBox="0 0 30 28"><path d="M0.5 0.5 L29.5 0.5 L29.5 21 Q29.5 27.5 23 27.5 L0.5 27.5 Z" fill="#fff" stroke="#a4a7a2" stroke-width="1"/><g clip-path="url(#icc)"><rect x="2.2" y="2" width="25.6" height="23.2" fill="url(#sky)"/><ellipse cx="10.2" cy="22.6" rx="3.6" ry="3" fill="#fff6b0"/><path d="M17.5 23 L17.5 19.5 L13.5 13.5 M17.5 19.5 L21 15.5 L22.5 13.5 M15.3 16.5 L12.8 15.3 M21 15.5 L20.6 13.8" fill="none" stroke="#151515" stroke-width="1"/><rect x="2.2" y="23.2" width="25.6" height="2" fill="#2b3134"/></g><path d="M23.5 27 Q24 22.5 29 21.5" fill="#f4f4f2" stroke="#a4a7a2" stroke-width="0.9"/></svg><div class="fn">Capture d’écran de 2020-11-211 10-00-00.png</div><div class="sz">185,6 ko</div><div class="dt">2 nov.</div><svg class="star" width="16" height="16" viewBox="0 0 16 16"><path d="M8 1.6 L9.9 5.6 L14.3 6.1 L11 9.1 L11.9 13.5 L8 11.3 L4.1 13.5 L5 9.1 L1.7 6.1 L6.1 5.6 Z" fill="none" stroke="#2e3436" stroke-width="1.7" stroke-linejoin="round"/></svg></div>
<div class="row" style="top:577px"><svg class="fic" width="30" height="28" viewBox="0 0 30 28"><path d="M0.5 0.5 L29.5 0.5 L29.5 21 Q29.5 27.5 23 27.5 L0.5 27.5 Z" fill="#fff" stroke="#a4a7a2" stroke-width="1"/><g clip-path="url(#icc)"><rect x="2.2" y="2" width="25.6" height="23.2" fill="url(#sky)"/><ellipse cx="10.2" cy="22.6" rx="3.6" ry="3" fill="#fff6b0"/><path d="M17.5 23 L17.5 19.5 L13.5 13.5 M17.5 19.5 L21 15.5 L22.5 13.5 M15.3 16.5 L12.8 15.3 M21 15.5 L20.6 13.8" fill="none" stroke="#151515" stroke-width="1"/><rect x="2.2" y="23.2" width="25.6" height="2" fill="#2b3134"/></g><path d="M23.5 27 Q24 22.5 29 21.5" fill="#f4f4f2" stroke="#a4a7a2" stroke-width="0.9"/></svg><div class="fn">Capture d’écran de 2020-10-30 13-03-48.png</div><div class="sz">367,7 ko</div><div class="dt">30 oct.</div><svg class="star" width="16" height="16" viewBox="0 0 16 16"><path d="M8 1.6 L9.9 5.6 L14.3 6.1 L11 9.1 L11.9 13.5 L8 11.3 L4.1 13.5 L5 9.1 L1.7 6.1 L6.1 5.6 Z" fill="none" stroke="#2e3436" stroke-width="1.7" stroke-linejoin="round"/></svg></div>
<div class="row" style="top:623px"><svg class="fic" width="30" height="28" viewBox="0 0 30 28"><path d="M0.5 0.5 L29.5 0.5 L29.5 21 Q29.5 27.5 23 27.5 L0.5 27.5 Z" fill="#fff" stroke="#a4a7a2" stroke-width="1"/><g clip-path="url(#icc)"><rect x="2.2" y="2" width="25.6" height="23.2" fill="url(#sky)"/><ellipse cx="10.2" cy="22.6" rx="3.6" ry="3" fill="#fff6b0"/><path d="M17.5 23 L17.5 19.5 L13.5 13.5 M17.5 19.5 L21 15.5 L22.5 13.5 M15.3 16.5 L12.8 15.3 M21 15.5 L20.6 13.8" fill="none" stroke="#151515" stroke-width="1"/><rect x="2.2" y="23.2" width="25.6" height="2" fill="#2b3134"/></g><path d="M23.5 27 Q24 22.5 29 21.5" fill="#f4f4f2" stroke="#a4a7a2" stroke-width="0.9"/></svg><div class="fn">Capture d’écran de 2020-10-30 11-51-59.png</div><div class="sz">992,8 ko</div><div class="dt">30 oct.</div><svg class="star" width="16" height="16" viewBox="0 0 16 16"><path d="M8 1.6 L9.9 5.6 L14.3 6.1 L11 9.1 L11.9 13.5 L8 11.3 L4.1 13.5 L5 9.1 L1.7 6.1 L6.1 5.6 Z" fill="none" stroke="#2e3436" stroke-width="1.7" stroke-linejoin="round"/></svg></div>
<div class="row" style="top:669px"><svg class="fic" width="30" height="28" viewBox="0 0 30 28"><path d="M0.5 0.5 L29.5 0.5 L29.5 21 Q29.5 27.5 23 27.5 L0.5 27.5 Z" fill="#fff" stroke="#a4a7a2" stroke-width="1"/><g clip-path="url(#icc)"><rect x="2.2" y="2" width="25.6" height="23.2" fill="url(#sky)"/><ellipse cx="10.2" cy="22.6" rx="3.6" ry="3" fill="#fff6b0"/><path d="M17.5 23 L17.5 19.5 L13.5 13.5 M17.5 19.5 L21 15.5 L22.5 13.5 M15.3 16.5 L12.8 15.3 M21 15.5 L20.6 13.8" fill="none" stroke="#151515" stroke-width="1"/><rect x="2.2" y="23.2" width="25.6" height="2" fill="#2b3134"/></g><path d="M23.5 27 Q24 22.5 29 21.5" fill="#f4f4f2" stroke="#a4a7a2" stroke-width="0.9"/></svg><div class="fn">Capture d’écran de 2020-10-30 11-29-51.png</div><div class="sz">335,1 ko</div><div class="dt">30 oct.</div><svg class="star" width="16" height="16" viewBox="0 0 16 16"><path d="M8 1.6 L9.9 5.6 L14.3 6.1 L11 9.1 L11.9 13.5 L8 11.3 L4.1 13.5 L5 9.1 L1.7 6.1 L6.1 5.6 Z" fill="none" stroke="#2e3436" stroke-width="1.7" stroke-linejoin="round"/></svg></div>
<div class="row" style="top:715px"><svg class="fic" width="30" height="28" viewBox="0 0 30 28"><path d="M0.5 0.5 L29.5 0.5 L29.5 21 Q29.5 27.5 23 27.5 L0.5 27.5 Z" fill="#fff" stroke="#a4a7a2" stroke-width="1"/><g clip-path="url(#icc)"><rect x="2.2" y="2" width="25.6" height="23.2" fill="url(#sky)"/><ellipse cx="10.2" cy="22.6" rx="3.6" ry="3" fill="#fff6b0"/><path d="M17.5 23 L17.5 19.5 L13.5 13.5 M17.5 19.5 L21 15.5 L22.5 13.5 M15.3 16.5 L12.8 15.3 M21 15.5 L20.6 13.8" fill="none" stroke="#151515" stroke-width="1"/><rect x="2.2" y="23.2" width="25.6" height="2" fill="#2b3134"/></g><path d="M23.5 27 Q24 22.5 29 21.5" fill="#f4f4f2" stroke="#a4a7a2" stroke-width="0.9"/></svg><div class="fn">Capture d’écran de 2020-10-28 15-15-56.png</div><div class="sz">124,6 ko</div><div class="dt">28 oct.</div><svg class="star" width="16" height="16" viewBox="0 0 16 16"><path d="M8 1.6 L9.9 5.6 L14.3 6.1 L11 9.1 L11.9 13.5 L8 11.3 L4.1 13.5 L5 9.1 L1.7 6.1 L6.1 5.6 Z" fill="none" stroke="#2e3436" stroke-width="1.7" stroke-linejoin="round"/></svg></div>
<div class="row" style="top:761px"><svg class="fic" width="30" height="28" viewBox="0 0 30 28"><path d="M0.5 0.5 L29.5 0.5 L29.5 21 Q29.5 27.5 23 27.5 L0.5 27.5 Z" fill="#fff" stroke="#a4a7a2" stroke-width="1"/><g clip-path="url(#icc)"><rect x="2.2" y="2" width="25.6" height="23.2" fill="url(#sky)"/><ellipse cx="10.2" cy="22.6" rx="3.6" ry="3" fill="#fff6b0"/><path d="M17.5 23 L17.5 19.5 L13.5 13.5 M17.5 19.5 L21 15.5 L22.5 13.5 M15.3 16.5 L12.8 15.3 M21 15.5 L20.6 13.8" fill="none" stroke="#151515" stroke-width="1"/><rect x="2.2" y="23.2" width="25.6" height="2" fill="#2b3134"/></g><path d="M23.5 27 Q24 22.5 29 21.5" fill="#f4f4f2" stroke="#a4a7a2" stroke-width="0.9"/></svg><div class="fn">Capture d’écran de 2020-10-26 16-43-10.png</div><div class="sz">243,6 ko</div><div class="dt">26 oct.</div><svg class="star" width="16" height="16" viewBox="0 0 16 16"><path d="M8 1.6 L9.9 5.6 L14.3 6.1 L11 9.1 L11.9 13.5 L8 11.3 L4.1 13.5 L5 9.1 L1.7 6.1 L6.1 5.6 Z" fill="none" stroke="#2e3436" stroke-width="1.7" stroke-linejoin="round"/></svg></div>
<div class="row" style="top:807px"><svg class="fic" width="30" height="28" viewBox="0 0 30 28"><path d="M0.5 0.5 L29.5 0.5 L29.5 21 Q29.5 27.5 23 27.5 L0.5 27.5 Z" fill="#fff" stroke="#a4a7a2" stroke-width="1"/><g clip-path="url(#icc)"><rect x="2.2" y="2" width="25.6" height="23.2" fill="url(#sky)"/><ellipse cx="10.2" cy="22.6" rx="3.6" ry="3" fill="#fff6b0"/><path d="M17.5 23 L17.5 19.5 L13.5 13.5 M17.5 19.5 L21 15.5 L22.5 13.5 M15.3 16.5 L12.8 15.3 M21 15.5 L20.6 13.8" fill="none" stroke="#151515" stroke-width="1"/><rect x="2.2" y="23.2" width="25.6" height="2" fill="#2b3134"/></g><path d="M23.5 27 Q24 22.5 29 21.5" fill="#f4f4f2" stroke="#a4a7a2" stroke-width="0.9"/></svg><div class="fn">Capture d’écran de 2020-10-26 09-32-01.png</div><div class="sz">118,1 ko</div><div class="dt">26 oct.</div><svg class="star" width="16" height="16" viewBox="0 0 16 16"><path d="M8 1.6 L9.9 5.6 L14.3 6.1 L11 9.1 L11.9 13.5 L8 11.3 L4.1 13.5 L5 9.1 L1.7 6.1 L6.1 5.6 Z" fill="none" stroke="#2e3436" stroke-width="1.7" stroke-linejoin="round"/></svg></div>
<div class="row" style="top:853px"><svg class="fic" width="30" height="28" viewBox="0 0 30 28"><path d="M0.5 0.5 L29.5 0.5 L29.5 21 Q29.5 27.5 23 27.5 L0.5 27.5 Z" fill="#fff" stroke="#a4a7a2" stroke-width="1"/><g clip-path="url(#icc)"><rect x="2.2" y="2" width="25.6" height="23.2" fill="url(#sky)"/><ellipse cx="10.2" cy="22.6" rx="3.6" ry="3" fill="#fff6b0"/><path d="M17.5 23 L17.5 19.5 L13.5 13.5 M17.5 19.5 L21 15.5 L22.5 13.5 M15.3 16.5 L12.8 15.3 M21 15.5 L20.6 13.8" fill="none" stroke="#151515" stroke-width="1"/><rect x="2.2" y="23.2" width="25.6" height="2" fill="#2b3134"/></g><path d="M23.5 27 Q24 22.5 29 21.5" fill="#f4f4f2" stroke="#a4a7a2" stroke-width="0.9"/></svg><div class="fn">Capture d’écran de 2020-10-23 12-00-00.png</div><div class="sz"></div><div class="dt">23 oct.</div><svg class="star" width="16" height="16" viewBox="0 0 16 16"><path d="M8 1.6 L9.9 5.6 L14.3 6.1 L11 9.1 L11.9 13.5 L8 11.3 L4.1 13.5 L5 9.1 L1.7 6.1 L6.1 5.6 Z" fill="none" stroke="#2e3436" stroke-width="1.7" stroke-linejoin="round"/></svg></div>
<div class="row" style="top:899px"><svg class="fic" width="30" height="28" viewBox="0 0 30 28"><path d="M0.5 0.5 L29.5 0.5 L29.5 21 Q29.5 27.5 23 27.5 L0.5 27.5 Z" fill="#fff" stroke="#a4a7a2" stroke-width="1"/><g clip-path="url(#icc)"><rect x="2.2" y="2" width="25.6" height="23.2" fill="url(#sky)"/><ellipse cx="10.2" cy="22.6" rx="3.6" ry="3" fill="#fff6b0"/><path d="M17.5 23 L17.5 19.5 L13.5 13.5 M17.5 19.5 L21 15.5 L22.5 13.5 M15.3 16.5 L12.8 15.3 M21 15.5 L20.6 13.8" fill="none" stroke="#151515" stroke-width="1"/><rect x="2.2" y="23.2" width="25.6" height="2" fill="#2b3134"/></g><path d="M23.5 27 Q24 22.5 29 21.5" fill="#f4f4f2" stroke="#a4a7a2" stroke-width="0.9"/></svg><div class="fn">Capture d’écran de 2020-10-23 10-00-00.png</div><div class="sz"></div><div class="dt">23 oct.</div><svg class="star" width="16" height="16" viewBox="0 0 16 16"><path d="M8 1.6 L9.9 5.6 L14.3 6.1 L11 9.1 L11.9 13.5 L8 11.3 L4.1 13.5 L5 9.1 L1.7 6.1 L6.1 5.6 Z" fill="none" stroke="#2e3436" stroke-width="1.7" stroke-linejoin="round"/></svg></div>
<div class="a" style="left:1335px;top:26px;width:9px;height:913px;background:#fcfcfc"></div>
</div>
</div>
<div id="term" class="a">
  <div id="ttl" class="a">francesco@biblioteca: ~</div><svg class="a" style="left:868px;top:10px" width="16" height="16" viewBox="0 0 16 16"><path d="M4.2 4.2 L11.8 11.8 M11.8 4.2 L4.2 11.8" stroke="#2e3436" stroke-width="2"/></svg>
  <div id="menu" class="a"><span style="left:8px">Fichier</span><span style="left:70px">Édition</span><span style="left:132px">Affichage</span><span style="left:211px">Rechercher</span><span style="left:302px">Terminal</span><span style="left:378px">Aide</span></div>
  <div id="scr" class="a">
<div class="tl" style="top:24px">        find / -type d | less</div>
<div class="tl" style="top:70px">All the files?</div>
<div class="tl" style="top:116px">        find / -type f | less</div>
<div class="tl" style="top:139px">$ neofetch</div>
<div class="tl" style="top:162px"><b>```                        </b><i>`</i>       <i>francesco</i>@<i>Dell_T20</i></div>
<div class="tl" style="top:185px"><b>  ` `.....---...</b><i>....--.```   -/</i>    ------------------</div>
<div class="tl" style="top:208px"><b>  +o   .--`         </b><i>/y:`      +.</i>   <i>OS</i>: FreeBSD 12.2-RELEASE amd64</div>
<div class="tl" style="top:231px"><b>   yo`:.            </b><i>:o      `+-</i>    <i>Uptime</i>: 15 days, 3 hours, 8 mins</div>
<div class="tl" style="top:254px"><b>    y/               </b><i>-/`   -o/</i>     <i>Packages</i>: 34 (pkg)</div>
<div class="tl" style="top:277px"><b>   .-                  </b><i>::/sy+:.</i>    <i>Shell</i>: sh</div>
<div class="tl" style="top:300px"><b>   /                     </b><i>`--  /</i>    <i>Terminal</i>: /dev/pts/0</div>
<div class="tl" style="top:323px"><b>  `:                          </b><i>:`</i>   <i>CPU</i>: Intel Pentium G3220 (2) @ 2.993GHz</div>
<div class="tl" style="top:346px"><b>  `:                          </b><i>:`</i>   <i>GPU</i>: Xeon E3-1200 v3/4th Gen Core Processor</div>
<div class="tl" style="top:369px"><b>   /                          </b><i>/</i>    <i>Memory</i>: 6258MiB / 8059MiB</div>
<div class="tl" style="top:392px"><b>   .-                        </b><i>-.</i></div>
<div class="tl" style="top:415px"><b>    --                      </b><i>-.</i></div>
<div class="tl" style="top:438px"><b>     `:`                  </b><i>`:`</i></div>
<div class="tl" style="top:461px"><i>       .--             `--.</i></div>
<div class="tl" style="top:484px"><i>          .---.....----.</i></div>
<div class="tl" style="top:530px">$ </div>
<div class="a" style="left:386px;top:415px;width:33px;height:23px;background:#2e3436"></div>
<div class="a" style="left:386px;top:438px;width:33px;height:23px;background:#555753"></div>
<div class="a" style="left:419px;top:415px;width:33px;height:23px;background:#cc0000"></div>
<div class="a" style="left:419px;top:438px;width:33px;height:23px;background:#ef2929"></div>
<div class="a" style="left:452px;top:415px;width:33px;height:23px;background:#4e9a06"></div>
<div class="a" style="left:452px;top:438px;width:33px;height:23px;background:#8ae234"></div>
<div class="a" style="left:485px;top:415px;width:33px;height:23px;background:#c4a000"></div>
<div class="a" style="left:485px;top:438px;width:33px;height:23px;background:#fce94f"></div>
<div class="a" style="left:518px;top:415px;width:33px;height:23px;background:#3465a4"></div>
<div class="a" style="left:518px;top:438px;width:33px;height:23px;background:#729fcf"></div>
<div class="a" style="left:551px;top:415px;width:33px;height:23px;background:#75507b"></div>
<div class="a" style="left:551px;top:438px;width:33px;height:23px;background:#ad7fa8"></div>
<div class="a" style="left:584px;top:415px;width:33px;height:23px;background:#06989a"></div>
<div class="a" style="left:584px;top:438px;width:33px;height:23px;background:#34e2e2"></div>
<div class="a" style="left:617px;top:415px;width:33px;height:23px;background:#d3d7cf"></div>
<div class="a" style="left:617px;top:438px;width:33px;height:23px;background:#eeeeec"></div>
</div>
  <div id="sb" class="a"><div class="a" style="left:2px;top:438px;width:6px;height:113px;border-radius:3px;background:#7e8283"></div></div>
</div>
<div id="dock" class="a"><svg class="a" style="left:0;top:0" width="1326" height="70" viewBox="177 980 1326 70"><defs>
<radialGradient id="ffo" cx="0.72" cy="0.15" r="0.95"><stop offset="0" stop-color="#fff44f"/><stop offset="0.35" stop-color="#ffbd2e"/><stop offset="0.6" stop-color="#ff7a1a"/><stop offset="0.85" stop-color="#ff3750"/><stop offset="1" stop-color="#e31587"/></radialGradient>
<radialGradient id="ffp" cx="0.45" cy="0.3" r="0.8"><stop offset="0" stop-color="#9a59ff"/><stop offset="0.6" stop-color="#7542e5"/><stop offset="1" stop-color="#4a3ac0"/></radialGradient>
<radialGradient id="glb" cx="0.35" cy="0.3" r="0.85"><stop offset="0" stop-color="#e8f4fb"/><stop offset="0.45" stop-color="#7fb8e0"/><stop offset="1" stop-color="#1a4a85"/></radialGradient>
<linearGradient id="cab" x1="0" y1="0" x2="0" y2="1"><stop offset="0" stop-color="#8fb3e8"/><stop offset="1" stop-color="#4a78c2"/></linearGradient>
<linearGradient id="mix" x1="0" y1="0" x2="0" y2="1"><stop offset="0" stop-color="#f2f2f0"/><stop offset="1" stop-color="#c9c9c5"/></linearGradient>
<linearGradient id="cone" x1="0" y1="0" x2="1" y2="0"><stop offset="0" stop-color="#e86a00"/><stop offset="0.5" stop-color="#ff9a1a"/><stop offset="1" stop-color="#d85a00"/></linearGradient>
<linearGradient id="osc" x1="0" y1="0" x2="0" y2="1"><stop offset="0" stop-color="#ffb868"/><stop offset="1" stop-color="#f59a30"/></linearGradient>
<linearGradient id="gscr" x1="0" y1="0" x2="1" y2="1"><stop offset="0" stop-color="#3f7a12"/><stop offset="1" stop-color="#1e3e0c"/></linearGradient>
<linearGradient id="gterm" x1="0" y1="0" x2="0" y2="1"><stop offset="0" stop-color="#3a3e3b"/><stop offset="1" stop-color="#232624"/></linearGradient>
</defs><rect x="195" y="995" width="42" height="38" rx="1.5" fill="#b9b9b6"/><rect x="195.5" y="995.5" width="41" height="3" fill="#e2e2e0"/><rect x="198" y="999" width="36" height="31" fill="url(#gterm)"/><path d="M198 1001.0 H234" stroke="#3d423e" stroke-width="0.8"/><path d="M198 1003.2 H234" stroke="#3d423e" stroke-width="0.8"/><path d="M198 1005.4 H234" stroke="#3d423e" stroke-width="0.8"/><path d="M198 1007.6 H234" stroke="#3d423e" stroke-width="0.8"/><path d="M198 1009.8 H234" stroke="#3d423e" stroke-width="0.8"/><path d="M198 1012.0 H234" stroke="#3d423e" stroke-width="0.8"/><path d="M198 1014.2 H234" stroke="#3d423e" stroke-width="0.8"/><path d="M198 1016.4 H234" stroke="#3d423e" stroke-width="0.8"/><path d="M198 1018.6 H234" stroke="#3d423e" stroke-width="0.8"/><path d="M198 1020.8 H234" stroke="#3d423e" stroke-width="0.8"/><path d="M198 1023.0 H234" stroke="#3d423e" stroke-width="0.8"/><path d="M198 1025.2 H234" stroke="#3d423e" stroke-width="0.8"/><path d="M198 1027.4 H234" stroke="#3d423e" stroke-width="0.8"/><path d="M200.8 1002 L203.8 1004.3 L200.8 1006.6" fill="none" stroke="#eeeeec" stroke-width="1.1"/><path d="M205 1009 H210" stroke="#eeeeec" stroke-width="1.3"/><g transform="translate(294,1015)"><path d="M-22 1.5 A22 22 0 0 0 22 1.5 C22 -8 17 -17 6.8 -24.2 C7.5 -19 6 -15.5 3 -13.5 C0 -14 -4 -14 -6.5 -13 L-7.3 -15.6 L-10 -12 L-13.6 -16.8 L-15.5 -10.5 C-19.5 -7 -22 -3 -22 1.5 Z" fill="url(#ffo)"/><circle cx="-0.7" cy="-1.3" r="9.6" fill="url(#ffp)"/><path d="M-17 -5 C-12 -8 -6 -5.5 -3 -6.8 C-2.5 -4.5 -6 -1.5 -8 0.5 C-8.5 2.5 -7.8 4.5 -6.5 6 C-11 3.5 -15 0.5 -17 -5 Z" fill="#ffab2a"/><path d="M4 -9 C9 -6 10.5 -1 9 4" fill="none" stroke="#ffc83a" stroke-width="2.2"/></g><circle cx="372" cy="1008.5" r="18" fill="url(#glb)"/><path d="M356 1006 Q372 990 388 1004" fill="none" stroke="#ffffff" stroke-opacity="0.35" stroke-width="3"/><path d="M367 998 L372 994 L378 997 L381 1000 L375 1001 Z" fill="#151515"/><path d="M372 1000 L361 1009 L360 1015 M373 1000 L371 1016 M374 1000 L384 1008 L385 1015 M373 1001 L366 1012" fill="none" stroke="#5f8f2a" stroke-width="3.2" stroke-linecap="round"/><path d="M359 1014 L361 1019 M370 1016 L371 1020 M384 1015 L383 1019" stroke="#e8dcb0" stroke-width="1.6"/><path d="M366 1021 L391 1021 L391 1035 L367 1035 Z" fill="#e9e9e7" stroke="#9a9a98" stroke-width="0.7"/><rect x="385" y="1023" width="3.5" height="3.5" fill="#d83a3a"/><path d="M355.5 1022 L380 1016 L383.5 1029 L359 1034 Z" fill="#f4f4f2" stroke="#9a9a98" stroke-width="0.7"/><path d="M356 1022.5 L371 1027 L380.5 1017" fill="none" stroke="#b0b0ae" stroke-width="0.8"/><path d="M436 991 L463 991 L466 995 L466 1035 L433 1035 L433 995 Z" fill="url(#cab)" stroke="#3f69ad" stroke-width="0.8"/><path d="M433.5 995 H465.5" stroke="#a9c4ee" stroke-width="1"/><rect x="436" y="998.5" width="27" height="16" fill="#6a94d6" stroke="#3e68ad" stroke-width="1"/><rect x="436" y="1016.5" width="27" height="16" fill="#6a94d6" stroke="#3e68ad" stroke-width="1"/><path d="M446 1006 L446 1008.5 L453 1008.5 L453 1006" fill="none" stroke="#f4f4f4" stroke-width="1.6"/><path d="M446 1024 L446 1026.5 L453 1026.5 L453 1024" fill="none" stroke="#f4f4f4" stroke-width="1.6"/><g transform="translate(508,991)"><path d="M1.5 1.5 L27 1.5 L38.5 13 L38.5 46.5 L1.5 46.5 Z" fill="#fff" stroke="#1b7fc9" stroke-width="3" stroke-linejoin="round"/><path d="M29 0 L40 0 L40 11 Z" fill="#1b7fc9"/><path d="M8 19 H16 M8 23 H16 M8 27 H16 M8 31 H32 M8 35 H32 M8 39 H26" stroke="#1b7fc9" stroke-width="2"/><rect x="19" y="17" width="13" height="11" fill="none" stroke="#1b7fc9" stroke-width="1.5"/><path d="M20 27 L24 21 L27 25 L29 23 L31 27 Z" fill="#1b7fc9"/></g><rect x="586" y="998" width="36" height="34" fill="#f0f0ee" stroke="#c0c0be" stroke-width="1"/><rect x="586" y="1027" width="36" height="5" fill="#dcdcda"/><path d="M589.0 999 V995.5" stroke="#4a4a4a" stroke-width="1.4" stroke-linecap="round"/><path d="M593.0 999 V995.5" stroke="#4a4a4a" stroke-width="1.4" stroke-linecap="round"/><path d="M597.0 999 V995.5" stroke="#4a4a4a" stroke-width="1.4" stroke-linecap="round"/><path d="M601.0 999 V995.5" stroke="#4a4a4a" stroke-width="1.4" stroke-linecap="round"/><path d="M605.0 999 V995.5" stroke="#4a4a4a" stroke-width="1.4" stroke-linecap="round"/><path d="M609.0 999 V995.5" stroke="#4a4a4a" stroke-width="1.4" stroke-linecap="round"/><path d="M613.0 999 V995.5" stroke="#4a4a4a" stroke-width="1.4" stroke-linecap="round"/><path d="M617.0 999 V995.5" stroke="#4a4a4a" stroke-width="1.4" stroke-linecap="round"/><path d="M590 1005 H604 M606 1005 H616 M590 1009 H600 M590 1013 H612 M590 1017 H602 M590 1025 H598 M600 1025 H606" stroke="#b4b4b2" stroke-width="1"/><path d="M604 1027 L624 1002 L629 1006 L609 1030 L603 1032 Z" fill="#f29a1e" stroke="#8a5a10" stroke-width="0.7"/><path d="M624 1002 L626.5 999 L631 1003 L629 1006 Z" fill="#e23a3a"/><path d="M604 1027 L603 1032 L609 1030 Z" fill="#f0d8a8"/><g transform="translate(664,991)"><path d="M1.5 1.5 L27 1.5 L38.5 13 L38.5 46.5 L1.5 46.5 Z" fill="#fff" stroke="#3cb21c" stroke-width="3" stroke-linejoin="round"/><path d="M29 0 L40 0 L40 11 Z" fill="#3cb21c"/><rect x="8" y="20" width="20" height="16" fill="none" stroke="#3cb21c" stroke-width="1.6"/><path d="M8 25 H28 M8 30 H28 M14 20 V36 M21 20 V36" stroke="#3cb21c" stroke-width="1.4"/><rect x="22" y="28" width="12" height="12" fill="#fff" stroke="#3cb21c" stroke-width="1.5"/><path d="M25 37 V34 M28 37 V31 M31 37 V33" stroke="#3cb21c" stroke-width="1.5"/></g><rect x="743" y="992" width="38" height="43" rx="3" fill="#eeeae2" stroke="#b9b4aa" stroke-width="1"/><rect x="746.5" y="997" width="31" height="8.5" rx="1" fill="#3a4048"/><rect x="751" y="999" width="24" height="4.5" fill="#c8d0b8"/><rect x="748.0" y="1009.0" width="6" height="4.2" rx="1" fill="#7a2a34"/><rect x="755.5" y="1009.0" width="6" height="4.2" rx="1" fill="#7a2a34"/><rect x="763.0" y="1009.0" width="6" height="4.2" rx="1" fill="#3a3f44"/><rect x="770.5" y="1009.0" width="6" height="4.2" rx="1" fill="#3a3f44"/><rect x="748.0" y="1015.2" width="6" height="4.2" rx="1" fill="#3a3f44"/><rect x="755.5" y="1015.2" width="6" height="4.2" rx="1" fill="#3a3f44"/><rect x="763.0" y="1015.2" width="6" height="4.2" rx="1" fill="#3a3f44"/><rect x="770.5" y="1015.2" width="6" height="4.2" rx="1" fill="#3a3f44"/><rect x="748.0" y="1021.4" width="6" height="4.2" rx="1" fill="#3a3f44"/><rect x="755.5" y="1021.4" width="6" height="4.2" rx="1" fill="#3a3f44"/><rect x="763.0" y="1021.4" width="6" height="4.2" rx="1" fill="#3a3f44"/><rect x="770.5" y="1021.4" width="6" height="4.2" rx="1" fill="#3a3f44"/><rect x="748.0" y="1027.6" width="6" height="4.2" rx="1" fill="#3a3f44"/><rect x="755.5" y="1027.6" width="6" height="4.2" rx="1" fill="#3a3f44"/><rect x="763.0" y="1027.6" width="6" height="4.2" rx="1" fill="#3a3f44"/><rect x="770.5" y="1027.6" width="6" height="4.2" rx="1" fill="#3a3f44"/><path d="M825 1000 L856 1031" stroke="#d8d8d6" stroke-width="4.5"/><path d="M823 995 A6.5 6.5 0 1 0 831 1003" fill="none" stroke="#e6e6e4" stroke-width="3.5"/><path d="M852 1034 A6.5 6.5 0 1 1 861 1026" fill="none" stroke="#e6e6e4" stroke-width="3.5"/><path d="M860 995 L836 1019" stroke="#d0d0ce" stroke-width="2"/><path d="M859 994 L861 996" stroke="#f0f0ee" stroke-width="3"/><path d="M837 1018 L822 1033" stroke="#3a70c0" stroke-width="5.5" stroke-linecap="round"/><path d="M836 1018 L824 1030" stroke="#6a9ae0" stroke-width="1.2"/><rect x="897" y="991" width="42" height="43" rx="2.5" fill="url(#mix)" stroke="#9a9a96" stroke-width="0.8"/><rect x="902.0" y="994.5" width="4" height="13" rx="2" fill="#6a6a68"/><circle cx="904.0" cy="1004.0" r="1.8" fill="#f4f4f4"/><rect x="909.2" y="994.5" width="4" height="13" rx="2" fill="#6a6a68"/><circle cx="911.2" cy="997.0" r="1.8" fill="#f4f4f4"/><rect x="916.4" y="994.5" width="4" height="13" rx="2" fill="#6a6a68"/><circle cx="918.4" cy="1002.0" r="1.8" fill="#f4f4f4"/><rect x="923.6" y="994.5" width="4" height="13" rx="2" fill="#6a6a68"/><circle cx="925.6" cy="999.5" r="1.8" fill="#f4f4f4"/><circle cx="907" cy="1023" r="7.5" fill="#cfcfcb" stroke="#6a6a68" stroke-width="1.6"/><path d="M922 1018 H932 M927 1018 V1029" stroke="#6a6a68" stroke-width="4.5" stroke-linecap="round"/><rect x="973" y="1001" width="46" height="15" rx="2.5" fill="#d4d4d0" stroke="#2a2a2a" stroke-width="1"/><rect x="974" y="1003" width="44" height="6" fill="#e8e8e6"/><path d="M977 997.5 Q977 996 979 996 L1013 996 Q1015 996 1015 997.5 L1016 1002 L976 1002 Z" fill="#3c3c3c"/><path d="M981 999 H985 M993 999 H996 M999 999 H1003" stroke="#aaaaaa" stroke-width="0.8"/><rect x="973.5" y="1013" width="45" height="4" fill="#2a2a2a"/><rect x="976" y="1016" width="40" height="17" rx="1" fill="#222"/><rect x="982" y="1018" width="28" height="12" fill="#dcdcd8"/><rect x="980" y="1030" width="32" height="2" fill="#777"/><rect x="1007" y="1029.5" width="3" height="2" fill="#3a7fd0"/><path d="M1054 1038 L1094 1038 L1091 1030 L1057 1030 Z" fill="#f07800"/><path d="M1068 993 L1080 993 L1089 1031 L1059 1031 Z" fill="url(#cone)"/><path d="M1066 1003 L1082 1003 L1084 1012 L1064 1012 Z" fill="#e8e8e8"/><path d="M1062 1018 L1086 1018 L1088 1027 L1060 1027 Z" fill="#e8e8e8"/><ellipse cx="1161.5" cy="1019" rx="10.5" ry="13.3" fill="#a8843a"/><circle cx="1154.0" cy="1009.0" r="1.1" fill="#4a3a14"/><circle cx="1158.0" cy="1009.0" r="1.1" fill="#4a3a14"/><circle cx="1162.0" cy="1009.0" r="1.1" fill="#4a3a14"/><circle cx="1166.0" cy="1009.0" r="1.1" fill="#4a3a14"/><circle cx="1156.0" cy="1013.0" r="1.1" fill="#4a3a14"/><circle cx="1160.0" cy="1013.0" r="1.1" fill="#4a3a14"/><circle cx="1164.0" cy="1013.0" r="1.1" fill="#4a3a14"/><circle cx="1168.0" cy="1013.0" r="1.1" fill="#4a3a14"/><circle cx="1154.0" cy="1017.0" r="1.1" fill="#4a3a14"/><circle cx="1158.0" cy="1017.0" r="1.1" fill="#4a3a14"/><circle cx="1162.0" cy="1017.0" r="1.1" fill="#4a3a14"/><circle cx="1166.0" cy="1017.0" r="1.1" fill="#4a3a14"/><circle cx="1156.0" cy="1021.0" r="1.1" fill="#4a3a14"/><circle cx="1160.0" cy="1021.0" r="1.1" fill="#4a3a14"/><circle cx="1164.0" cy="1021.0" r="1.1" fill="#4a3a14"/><circle cx="1168.0" cy="1021.0" r="1.1" fill="#4a3a14"/><circle cx="1154.0" cy="1025.0" r="1.1" fill="#4a3a14"/><circle cx="1158.0" cy="1025.0" r="1.1" fill="#4a3a14"/><circle cx="1162.0" cy="1025.0" r="1.1" fill="#4a3a14"/><circle cx="1166.0" cy="1025.0" r="1.1" fill="#4a3a14"/><circle cx="1156.0" cy="1029.0" r="1.1" fill="#4a3a14"/><circle cx="1160.0" cy="1029.0" r="1.1" fill="#4a3a14"/><circle cx="1164.0" cy="1029.0" r="1.1" fill="#4a3a14"/><circle cx="1168.0" cy="1029.0" r="1.1" fill="#4a3a14"/><path d="M1163 1007 L1158 994 M1164 1007 L1165 992 M1165 1007 L1173 996 M1162 1007 L1154 1000" stroke="#3a7a1a" stroke-width="2.6" stroke-linecap="round"/><path d="M1129 1010 Q1129 1025 1141 1025 Q1153 1025 1153 1010 Z" fill="#d84a28"/><path d="M1131 1019 Q1141 1026 1151 1019" fill="none" stroke="#f09030" stroke-width="2.5"/><ellipse cx="1141" cy="1010" rx="12" ry="3" fill="#e07060" stroke="#c0c0c0" stroke-width="0.8"/><path d="M1141 1025 V1033" stroke="#c8c8c8" stroke-width="2"/><ellipse cx="1141" cy="1035" rx="6.5" ry="2.3" fill="none" stroke="#c8c8c8" stroke-width="1.6"/><circle cx="1132.5" cy="996.5" r="2" fill="#e020a0"/><path d="M1130 1001 Q1136 998 1138 1001 Q1134 1004 1130 1001 Z" fill="#d8d080"/><path d="M1141 999 Q1146 996 1152 1000 Z" fill="#20c020" stroke="#20c020" stroke-width="1.5"/><circle cx="1135.5" cy="1004.5" r="1.8" fill="#c01010"/><rect x="1226" y="992" width="4" height="6" fill="#4a7ad0"/><rect x="1233" y="992" width="4" height="6" fill="#a060b0"/><rect x="1226" y="1031" width="4" height="6" fill="#4a7ad0"/><rect x="1233" y="1031" width="4" height="6" fill="#a060b0"/><rect x="1213" y="998" width="35" height="33" rx="2" fill="#f2f2f0" stroke="#b0b0ae" stroke-width="0.8"/><rect x="1215.5" y="1001" width="30" height="16.5" rx="1.2" fill="url(#osc)" stroke="#d87818" stroke-width="0.8"/><path d="M1217 1008 H1220 V1004.5 H1223 V1011 H1228 V1004.5 H1231 V1011 H1236 V1004.5 H1239 V1008 H1244" fill="none" stroke="#fff" stroke-width="0.8"/><rect x="1216" y="1020" width="9" height="9" fill="none" stroke="#b8b8b6" stroke-width="0.8"/><circle cx="1232.5" cy="1024.5" r="3" fill="none" stroke="#a0a09e" stroke-width="0.9"/><circle cx="1241.5" cy="1024.5" r="3" fill="none" stroke="#a0a09e" stroke-width="0.9"/><rect x="1287.5" y="995" width="41" height="38" rx="1" fill="#d0d0ce" stroke="#9a9a98" stroke-width="0.8"/><rect x="1290" y="1000" width="36" height="30" fill="url(#gscr)" stroke="#0e1e06" stroke-width="0.6"/><path d="M1291 1016.5 H1299 L1302.5 1004.5 L1304.8 1024 L1307 1016.5 H1311 L1313.5 1009.5 L1315.8 1023 L1317.5 1016.5 H1325" fill="none" stroke="#8ee040" stroke-width="1.3"/><path d="M1362 1008.5 H1368 L1371 1020 L1377 1008.5 H1381 L1373 1025 H1367.5 Z" fill="#a0304a"/><path d="M1381 1008.5 H1387 L1378 1025 H1372 Z" fill="#b8b8b8"/><path d="M1387 1008.5 H1393 L1390 1025 H1384 Z" fill="#8a8a8a"/><path d="M1393 1008.5 H1399 L1396 1025 H1390 Z" fill="#c8c8c8"/><path d="M1399 1008.5 H1404 L1408.5 1025 H1402 Z" fill="#9a9a9a"/><circle cx="1452" cy="1003" r="3.2" fill="#eeeeec"/><circle cx="1464" cy="1003" r="3.2" fill="#eeeeec"/><circle cx="1476" cy="1003" r="3.2" fill="#eeeeec"/><circle cx="1452" cy="1015" r="3.2" fill="#eeeeec"/><circle cx="1464" cy="1015" r="3.2" fill="#eeeeec"/><circle cx="1476" cy="1015" r="3.2" fill="#eeeeec"/><circle cx="1452" cy="1027" r="3.2" fill="#eeeeec"/><circle cx="1464" cy="1027" r="3.2" fill="#eeeeec"/><circle cx="1476" cy="1027" r="3.2" fill="#eeeeec"/><rect x="211" y="1041" width="10" height="3" fill="#2a72c4"/><rect x="289" y="1041" width="10" height="3" fill="#2a72c4"/><rect x="445" y="1041" width="10" height="3" fill="#2a72c4"/><rect x="601" y="1041" width="10" height="3" fill="#2a72c4"/></svg></div>
</body></html>
